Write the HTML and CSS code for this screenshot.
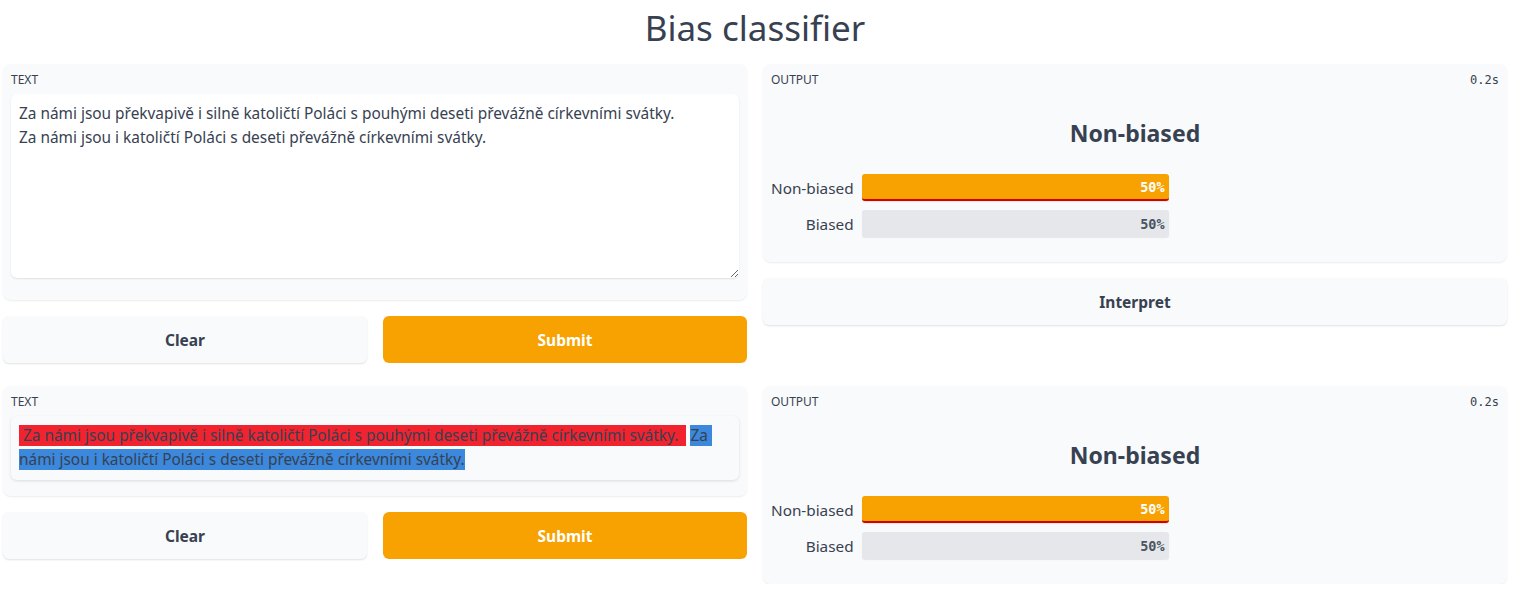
FILE: index.html
```html
<!DOCTYPE html>
<html>
<head>
<meta charset="utf-8">
<link rel="stylesheet" href="styles.css">
</head>
<body>
<div class="app">
  <h1 class="title">Bias classifier</h1>

  <div class="row">
    <div class="col">
      <div class="panel input-panel">
        <div class="label">TEXT</div>
        <textarea class="textbox">Za námi jsou překvapivě i silně katoličtí Poláci s pouhými deseti převážně církevními svátky.
Za námi jsou i katoličtí Poláci s deseti převážně církevními svátky.</textarea>
      </div>
      <div class="buttons">
        <div class="btn btn-secondary">Clear</div>
        <div class="btn btn-primary">Submit</div>
      </div>
    </div>
    <div class="col">
      <div class="panel output-panel">
        <div class="panel-head"><span class="label">OUTPUT</span><span class="time">0.2s</span></div>
        <div class="result">Non-biased</div>
        <div class="bars">
          <div class="bar-label">Non-biased</div>
          <div class="bar bar-top"><span>50%</span></div>
          <div class="bar-label">Biased</div>
          <div class="bar"><span>50%</span></div>
        </div>
      </div>
      <div class="btn btn-secondary interpret">Interpret</div>
    </div>
  </div>

  <div class="row row2">
    <div class="col">
      <div class="panel input-panel2">
        <div class="label">TEXT</div>
        <div class="hl-box"><span class="hl-red"> Za námi jsou překvapivě i silně katoličtí Poláci s pouhými deseti převážně církevními svátky.  </span> <span class="hl-blue">Za námi jsou i katoličtí Poláci s deseti převážně církevními svátky.</span></div>
      </div>
      <div class="buttons">
        <div class="btn btn-secondary">Clear</div>
        <div class="btn btn-primary">Submit</div>
      </div>
    </div>
    <div class="col">
      <div class="panel output-panel">
        <div class="panel-head"><span class="label">OUTPUT</span><span class="time">0.2s</span></div>
        <div class="result">Non-biased</div>
        <div class="bars">
          <div class="bar-label">Non-biased</div>
          <div class="bar bar-top"><span>50%</span></div>
          <div class="bar-label">Biased</div>
          <div class="bar"><span>50%</span></div>
        </div>
      </div>
    </div>
  </div>
</div>
</body>
</html>
```
FILE: styles.css
```css
* { box-sizing: border-box; }
body {
  margin: 0;
  background: #ffffff;
  font-family: "Noto Sans", "Open Sans", sans-serif;
  color: #374151;
}
.app {
  padding: 0 9px 0 3px;
}
.title {
  margin: 0 0 8px;
  height: 56px;
  line-height: 56px;
  text-align: center;
  font-weight: 400;
  font-size: 35px;
  color: #374151;
}
.row {
  display: grid;
  grid-template-columns: 1fr 1fr;
  gap: 16px;
  align-items: start;
}
.row2 { margin-top: 23px; }
.col {
  display: flex;
  flex-direction: column;
  gap: 16px;
}
.panel {
  background: #f9fafb;
  border-radius: 8px;
  box-shadow: 0 1px 2px rgba(0,0,0,0.08);
  padding: 8px;
}
.label {
  font-size: 12px;
  line-height: 16px;
  color: #374151;
  height: 22px;
  text-transform: uppercase;
  display: block;
}
.input-panel { height: 236px; }
.textbox {
  display: block;
  width: 100%;
  height: 184px;
  border: none;
  border-radius: 6px;
  background: #ffffff;
  box-shadow: 0 1px 2px rgba(0,0,0,0.1);
  padding: 8px;
  font-family: "Noto Sans", "Open Sans", sans-serif;
  font-size: 15.4px;
  line-height: 24px;
  color: #374151;
  resize: vertical;
  outline: none;
}
.buttons {
  display: grid;
  grid-template-columns: 1fr 1fr;
  gap: 16px;
}
.btn {
  height: 47px;
  border-radius: 6px;
  display: flex;
  align-items: center;
  justify-content: center;
  font-weight: 700;
  font-size: 15.5px;
}
.btn-secondary {
  background: #f9fafb;
  color: #374151;
  box-shadow: 0 1px 2px rgba(0,0,0,0.12);
}
.btn-primary {
  background: #f7a200;
  color: #ffffff;
}
.output-panel { height: 198px; }
.panel-head {
  display: flex;
  justify-content: space-between;
}
.panel-head .label { height: 22px; }
.time {
  font-family: "DejaVu Sans Mono", "Liberation Mono", monospace;
  font-size: 12px;
  line-height: 16px;
  color: #374151;
}
.result {
  text-align: center;
  font-size: 23px;
  font-weight: 700;
  line-height: 32px;
  margin-top: 23px;
  color: #374151;
}
.bars {
  display: grid;
  grid-template-columns: auto 307px;
  justify-content: start;
  column-gap: 8px;
  row-gap: 9px;
  margin-top: 25px;
  align-items: center;
}
.bar-label {
  text-align: right;
  font-size: 15.3px;
  line-height: 20px;
  color: #374151;
}
.bar {
  height: 27px;
  background: #e5e7eb;
  border-radius: 3px;
  display: flex;
  align-items: center;
  justify-content: flex-end;
  padding-right: 4px;
  font-family: "DejaVu Sans Mono", "Liberation Mono", monospace;
  font-weight: 700;
  font-size: 13.5px;
  color: #4b5563;
  box-shadow: 0 1px 1px rgba(0,0,0,0.08);
}
.bar-top {
  background: #f7a200;
  color: #ffffff;
  border-bottom: 2px solid #d40000;
}
.interpret { height: 47px; }
.input-panel2 { height: 110px; }
.hl-box {
  background: #f9fafb;
  border-radius: 6px;
  box-shadow: 0 1px 3px rgba(0,0,0,0.12);
  padding: 8px;
  height: 64px;
  font-size: 15.4px;
  line-height: 24px;
  color: #374151;
  white-space: pre-wrap;
}
.hl-red { background: #f0232f; }
.hl-blue { background: #3b88dc; }
```
